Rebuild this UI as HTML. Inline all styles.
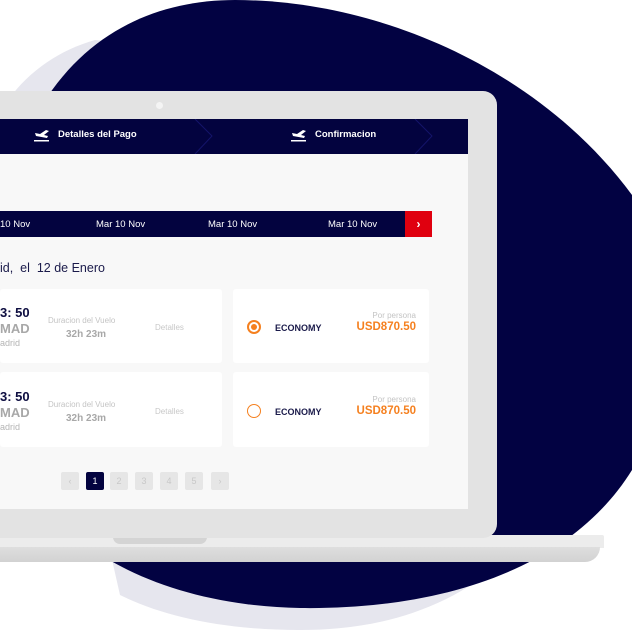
<!DOCTYPE html>
<html><head><meta charset="utf-8"><style>
*{margin:0;padding:0;box-sizing:border-box}
body{width:632px;height:631px;overflow:hidden;background:#fff;font-family:"Liberation Sans",sans-serif;position:relative}
.a{position:absolute}
.t{position:absolute;white-space:nowrap}
.card{position:absolute;background:#fff;border-radius:3px}
.pg{position:absolute;top:472px;width:18px;height:18px;background:#e6e6e6;border-radius:2px;color:#c8c8c8;font-size:9px;text-align:center;line-height:18px}
</style></head><body>
<svg class="a" style="left:0;top:0" width="632" height="631">
<path d="M8 100 C30 70 60 50 95 40 L300 60 L560 500 C480 610 380 630 300 630 C220 630 160 615 120 595 Z" fill="#e6e6ee"/>
<path d="M38 112 C85 30 160 0 235 0 C380 0 540 70 632 195 L632 470 C570 570 440 610 300 608 C180 606 70 560 30 480 Z" fill="#020242"/>
</svg>
<div class="a" style="left:0;top:535px;width:604px;height:13px;background:#ececec;border-radius:0 2px 0 0"></div>
<div class="a" style="left:0;top:547px;width:600px;height:15px;background:linear-gradient(#dedede,#d2d2d2);border-radius:0 0 60px 0"></div>
<div class="a" style="left:113px;top:537px;width:94px;height:7px;background:#d4d4d4;border-radius:0 0 10px 10px"></div>
<div class="a" style="left:-10px;top:91px;width:507px;height:447px;background:#e3e3e3;border-radius:0 14px 14px 0"></div>
<div class="a" style="left:156px;top:102px;width:7px;height:7px;background:#f4f4f4;border-radius:50%"></div>
<div class="a" style="left:0;top:119px;width:468px;height:390px;background:#f8f8f8"></div>
<div class="a" style="left:0;top:119px;width:468px;height:35px;background:#03033f"></div>
<svg class="a" style="left:0;top:119px" width="468" height="35"><path d="M195 0 L212 17 L195 35" stroke="#14146a" fill="none"/><path d="M415 0 L432 17 L415 35" stroke="#14146a" fill="none"/>
<g fill="#fff"><path d="M35 14 L40 15 L46 11 L49 12 L44 16 L48 17 L47 19 L36 17 Z"/><rect x="34" y="21" width="15" height="1.5"/>
<path d="M292 14 L297 15 L303 11 L306 12 L301 16 L305 17 L304 19 L293 17 Z"/><rect x="291" y="21" width="15" height="1.5"/></g></svg>
<div class="t" style="left:58px;top:129px;color:#fff;font-size:9.5px;font-weight:bold">Detalles del Pago</div>
<div class="t" style="left:315px;top:129px;color:#fff;font-size:9.5px;font-weight:bold">Confirmacion</div>
<div class="a" style="left:0;top:211px;width:405px;height:26px;background:#03033f"></div>
<div class="a" style="left:405px;top:211px;width:27px;height:26px;background:#e0000f;color:#fff;font-weight:bold;font-size:12px;text-align:center;line-height:26px">&#x203A;</div>
<div class="t" style="left:0;top:219px;color:#fff;font-size:9.5px">10 Nov</div>
<div class="t" style="left:96px;top:219px;color:#fff;font-size:9.5px">Mar 10 Nov</div>
<div class="t" style="left:208px;top:219px;color:#fff;font-size:9.5px">Mar 10 Nov</div>
<div class="t" style="left:328px;top:219px;color:#fff;font-size:9.5px">Mar 10 Nov</div>
<div class="t" style="left:0;top:261px;color:#1a1a4a;font-size:12.5px">id,&nbsp; el&nbsp; 12 de Enero</div>
<div class="card" style="left:0;top:289px;width:222px;height:74px"></div>
<div class="card" style="left:0;top:372px;width:222px;height:75px"></div>
<div class="card" style="left:233px;top:289px;width:196px;height:74px"></div>
<div class="card" style="left:233px;top:372px;width:196px;height:75px"></div>
<div class="t" style="left:0;top:305px;color:#0d0d40;font-size:13px;font-weight:bold">3: 50</div>
<div class="t" style="left:0;top:321px;color:#a8a8a8;font-size:13px;font-weight:bold">MAD</div>
<div class="t" style="left:0;top:338px;color:#b5b5b5;font-size:9px">adrid</div>
<div class="t" style="left:48px;top:316px;color:#c4c4c4;font-size:8px">Duracion del Vuelo</div>
<div class="t" style="left:66px;top:329px;color:#a8a8a8;font-size:10px;font-weight:bold">32h 23m</div>
<div class="t" style="left:155px;top:323px;color:#c8c8c8;font-size:8px">Detalles</div>
<div class="t" style="left:0;top:389px;color:#0d0d40;font-size:13px;font-weight:bold">3: 50</div>
<div class="t" style="left:0;top:405px;color:#a8a8a8;font-size:13px;font-weight:bold">MAD</div>
<div class="t" style="left:0;top:422px;color:#b5b5b5;font-size:9px">adrid</div>
<div class="t" style="left:48px;top:400px;color:#c4c4c4;font-size:8px">Duracion del Vuelo</div>
<div class="t" style="left:66px;top:413px;color:#a8a8a8;font-size:10px;font-weight:bold">32h 23m</div>
<div class="t" style="left:155px;top:407px;color:#c8c8c8;font-size:8px">Detalles</div>
<div class="a" style="left:247px;top:320px;width:14px;height:14px;border:2px solid #f5801f;border-radius:50%"></div>
<div class="a" style="left:251px;top:324px;width:6px;height:6px;background:#f5801f;border-radius:50%"></div>
<div class="a" style="left:247px;top:404px;width:14px;height:14px;border:1.5px solid #f5801f;border-radius:50%"></div>
<div class="t" style="left:275px;top:323px;color:#1a1a4a;font-size:9px;font-weight:bold">ECONOMY</div>
<div class="t" style="left:275px;top:407px;color:#1a1a4a;font-size:9px;font-weight:bold">ECONOMY</div>
<div class="t" style="right:216px;top:311px;color:#c4c4c4;font-size:8px">Por persona</div>
<div class="t" style="right:216px;top:321px;color:#f5801f;font-size:11.5px;font-weight:bold">USD870.50</div>
<div class="t" style="right:216px;top:395px;color:#c4c4c4;font-size:8px">Por persona</div>
<div class="t" style="right:216px;top:405px;color:#f5801f;font-size:11.5px;font-weight:bold">USD870.50</div>
<div class="pg" style="left:61px">&#x2039;</div>
<div class="pg" style="left:86px;background:#03033f;color:#fff">1</div>
<div class="pg" style="left:110px">2</div>
<div class="pg" style="left:135px">3</div>
<div class="pg" style="left:160px">4</div>
<div class="pg" style="left:185px">5</div>
<div class="pg" style="left:211px">&#x203A;</div>
</body></html>
